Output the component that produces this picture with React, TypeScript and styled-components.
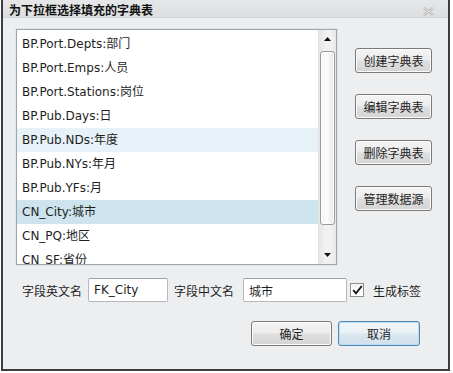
import styled, { createGlobalStyle } from 'styled-components';

interface IDict {
  id: string;
  label: string;
}

const dicts: IDict[] = [
  { id: 'depts', label: 'BP.Port.Depts:部门' },
  { id: 'emps', label: 'BP.Port.Emps:人员' },
  { id: 'stations', label: 'BP.Port.Stations:岗位' },
  { id: 'days', label: 'BP.Pub.Days:日' },
  { id: 'nds', label: 'BP.Pub.NDs:年度' },
  { id: 'nys', label: 'BP.Pub.NYs:年月' },
  { id: 'yfs', label: 'BP.Pub.YFs:月' },
  { id: 'city', label: 'CN_City:城市' },
  { id: 'pq', label: 'CN_PQ:地区' },
  { id: 'sf', label: 'CN_SF:省份' },
];

const actions = ['创建字典表', '编辑字典表', '删除字典表', '管理数据源'];

export default function App() {
  const hovered = 'nds';
  const selected = 'city';
  return (
    <>
      <GlobalStyle />
      <Window>
        <TitleBar>
          <Title>为下拉框选择填充的字典表</Title>
          <CloseIcon width="11" height="9" viewBox="0 0 11 9">
            <path d="M1 1 L10 8 M10 1 L1 8" stroke="#b5b5b5" strokeWidth="2.4" />
            <path d="M1 1 L10 8 M10 1 L1 8" stroke="#f4f4f4" strokeWidth="0.8" />
          </CloseIcon>
        </TitleBar>
        <Body>
          <Top>
            <ListBox>
              <Items>
                {dicts.map((d) => (
                  <Item key={d.id} $state={d.id === selected ? 'selected' : d.id === hovered ? 'hover' : 'none'}>
                    {d.label}
                  </Item>
                ))}
              </Items>
              <ScrollBar>
                <ArrowBtn>
                  <svg width="7" height="4" viewBox="0 0 7 4">
                    <path d="M0 4 L3.5 0 L7 4 Z" fill="#111" />
                  </svg>
                </ArrowBtn>
                <Thumb />
                <Track />
                <ArrowBtn>
                  <svg width="7" height="4" viewBox="0 0 7 4">
                    <path d="M0 0 L7 0 L3.5 4 Z" fill="#111" />
                  </svg>
                </ArrowBtn>
              </ScrollBar>
            </ListBox>
            <ActionCol>
              {actions.map((a) => (
                <Button key={a} $w={77}>
                  {a}
                </Button>
              ))}
            </ActionCol>
          </Top>
          <FieldRow>
            <Label>字段英文名</Label>
            <Input $w={80} defaultValue="FK_City" />
            <Label $gap={9}>字段中文名</Label>
            <Input $w={104} defaultValue="城市" />
            <Check>
              <CheckBox>
                <svg width="11" height="10" viewBox="0 0 11 10">
                  <path d="M1.2 5.2 L4 8.4 L9.8 1" stroke="#111" strokeWidth="1.8" fill="none" />
                </svg>
              </CheckBox>
              <CheckText>生成标签</CheckText>
            </Check>
          </FieldRow>
          <Footer>
            <Button $w={81}>确定</Button>
            <Button $w={82} $default>
              取消
            </Button>
          </Footer>
        </Body>
      </Window>
    </>
  );
}

const GlobalStyle = createGlobalStyle`
  html, body {
    margin: 0;
    padding: 0;
    background: #ffffff;
  }
  body {
    font-family: "DejaVu Sans", "Noto Sans CJK SC", sans-serif;
    font-size: 12px;
    color: #1e1e1e;
  }
  * {
    box-sizing: border-box;
  }
`;

const Window = styled.div`
  width: 449px;
  height: 371px;
  margin-left: 1px;
  border: 2px solid #3b3d40;
  border-top: none;
  background: #eceef0;
  display: flex;
  flex-direction: column;
`;

const TitleBar = styled.div`
  height: 18px;
  display: flex;
  align-items: center;
  justify-content: space-between;
  padding: 0 14px 0 6px;
  background: linear-gradient(#e6e7e9, #dcdee0);
  border-bottom: 1px solid #d4d6d9;
`;

const Title = styled.div`
  font-family: "Noto Sans CJK SC", "DejaVu Sans", sans-serif;
  font-weight: 700;
  font-size: 12px;
  color: #111;
  padding-top: 1px;
`;

const CloseIcon = styled.svg`
  display: block;
  margin-top: 6px;
`;

const Body = styled.div`
  padding: 11px 0 0 13px;
  display: flex;
  flex-direction: column;
`;

const Top = styled.div`
  display: flex;
  align-items: flex-start;
`;

const ListBox = styled.div`
  width: 321px;
  height: 236px;
  display: flex;
  background: #ffffff;
  border: 1px solid #9ea4ab;
  box-shadow: 0 0 0 1px #e3e6e9;
  overflow: hidden;
`;

const Items = styled.div`
  flex: 1;
  padding-top: 2px;
  overflow: hidden;
`;

const Item = styled.div<{ $state: 'selected' | 'hover' | 'none' }>`
  height: 24px;
  line-height: 24px;
  padding-left: 5px;
  white-space: nowrap;
  font-size: 12px;
  color: #1e1e1e;
  background: ${(p) => (p.$state === 'selected' ? '#cde4ee' : p.$state === 'hover' ? '#e6f2f7' : 'transparent')};
`;

const ScrollBar = styled.div`
  width: 18px;
  display: flex;
  flex-direction: column;
  background: linear-gradient(90deg, #e6e6e6, #f2f2f2 40%, #f2f2f2 70%, #e8e8e8);
  border-left: 1px solid #e0e0e0;
`;

const ArrowBtn = styled.div`
  height: 18px;
  display: flex;
  align-items: center;
  justify-content: center;
`;

const Thumb = styled.div`
  height: 174px;
  margin: 3px 1px 0 1px;
  border: 1px solid #9b9b9b;
  border-radius: 3px;
  background: linear-gradient(90deg, #f4f4f4, #fdfdfd 45%, #e6e6e6);
  box-shadow: inset 0 0 0 1px #ffffff;
`;

const Track = styled.div`
  flex: 1;
`;

const ActionCol = styled.div`
  display: flex;
  flex-direction: column;
  gap: 21px;
  margin-left: 18px;
  padding-top: 19px;
`;

const Button = styled.div<{ $w: number; $default?: boolean }>`
  width: ${(p) => p.$w}px;
  height: 25px;
  display: flex;
  align-items: center;
  justify-content: center;
  font-family: "Noto Sans CJK SC", "DejaVu Sans", sans-serif;
  font-size: 12px;
  color: #1e1e1e;
  border: 1px solid ${(p) => (p.$default ? '#4f86b3' : '#7a7a7a')};
  border-radius: 3px;
  background: ${(p) =>
    p.$default
      ? 'linear-gradient(#f0f6fa 0%, #e9f1f6 48%, #dae7ef 52%, #d0e0ea 100%)'
      : 'linear-gradient(#f4f4f4 0%, #ececec 48%, #dfdfdf 52%, #d4d4d4 100%)'};
  box-shadow: inset 0 0 0 1px ${(p) => (p.$default ? '#bfe0f3' : '#fbfbfb')};
`;

const FieldRow = styled.div`
  display: flex;
  align-items: center;
  height: 24px;
  margin-top: 13px;
  padding-left: 6px;
`;

const Label = styled.span<{ $gap?: number }>`
  font-family: "Noto Sans CJK SC", "DejaVu Sans", sans-serif;
  font-size: 12px;
  margin-right: ${(p) => p.$gap ?? 6}px;
`;

const Input = styled.input<{ $w: number }>`
  width: ${(p) => p.$w}px;
  height: 24px;
  margin: 0 6px 0 0;
  padding: 0 0 0 5px;
  font-family: "DejaVu Sans", "Noto Sans CJK SC", sans-serif;
  font-size: 12px;
  color: #1e1e1e;
  background: #ffffff;
  border: 1px solid #b4b8bd;
  border-top-color: #9aa0a6;
  border-radius: 2px;
  outline: none;
`;

const Check = styled.label`
  display: flex;
  align-items: center;
  gap: 9px;
  margin-left: -3px;
`;

const CheckBox = styled.span`
  width: 14px;
  height: 14px;
  display: flex;
  align-items: center;
  justify-content: center;
  background: linear-gradient(#f2f2f2, #ffffff);
  border: 1px solid #8e8f8f;
`;

const CheckText = styled.span`
  font-family: "Noto Sans CJK SC", "DejaVu Sans", sans-serif;
  font-size: 12px;
`;

const Footer = styled.div`
  display: flex;
  justify-content: flex-end;
  gap: 6px;
  margin-top: 19px;
  padding-right: 28px;
`;
